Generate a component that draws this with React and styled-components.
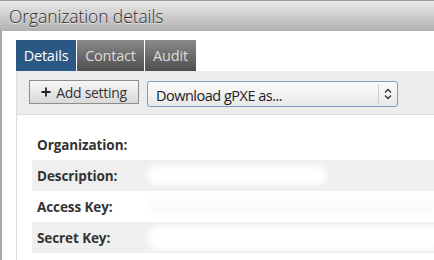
import React from "react";
import styled, { createGlobalStyle } from "styled-components";

const Global = createGlobalStyle`
  html, body { margin: 0; padding: 0; background: #fff; }
  body { font-family: "Open Sans", "Noto Sans", sans-serif; overflow: hidden; }
`;

const Page = styled.div`
  width: 434px;
  height: 260px;
  display: flex;
  flex-direction: column;
`;

const Header = styled.div`
  height: 30px;
  border-top: 1px solid #9a9a9a;
  background: linear-gradient(#e9e9e9, #b1b1b1);
  display: flex;
  align-items: center;
  padding-left: 9px;
  font-size: 17.5px;
  font-weight: 300;
  color: #2e2e2e;
  text-shadow: 0 1px 0 rgba(255,255,255,0.6);
  letter-spacing: -0.1px;
`;

const Body = styled.div`
  flex: 1;
  border-left: 2px solid #a8a8a8;
  padding: 9px 0 0 14px;
  display: flex;
  flex-direction: column;
`;

const Tabs = styled.div`
  display: flex;
  gap: 1px;
  height: 31px;
`;

const Tab = styled.div`
  width: ${p => p.$w}px;
  display: flex;
  align-items: center;
  justify-content: center;
  font-size: 14.5px;
  letter-spacing: -0.2px;
  color: ${p => (p.$active ? "#fff" : "#dcdcdc")};
  background: ${p =>
    p.$active ? "#2b5785" : "linear-gradient(#8a8a8a, #4e4e4e)"};
`;

const Panel = styled.div`
  flex: 1;
  border-left: 1px solid #dedede;
  display: flex;
  flex-direction: column;
`;

const Toolbar = styled.div`
  height: 44px;
  background: #ececec;
  border-bottom: 1px solid #dcdcdc;
  display: flex;
  align-items: flex-start;
  padding: 9px 0 0 12px;
  box-sizing: border-box;
  gap: 8px;
`;

const Button = styled.div`
  width: 110px;
  height: 24px;
  box-sizing: border-box;
  border: 1px solid #8e8e8e;
  background: linear-gradient(#f6f6f6, #d9d9d9);
  display: flex;
  align-items: center;
  justify-content: center;
  gap: 5px;
  font-size: 14px;
  letter-spacing: -0.3px;
  color: #333;
`;

const Select = styled.div`
  margin-top: 1px;
  width: 251px;
  height: 26px;
  box-sizing: border-box;
  border: 1px solid #7d9cc4;
  border-radius: 3px;
  background: linear-gradient(#fbfbfb, #e8e8e8);
  display: flex;
  align-items: center;
  font-size: 14.5px;
  letter-spacing: -0.5px;
  color: #222;
`;

const SelectText = styled.div`
  flex: 1;
  padding-left: 8px;
  padding-top: 3px;
`;

const SelectSep = styled.div`
  width: 1px;
  height: 20px;
  background: #cfcfcf;
`;

const SelectArrow = styled.div`
  width: 18px;
  display: flex;
  justify-content: center;
`;

const Rows = styled.div`
  padding: 14px 0 0 15px;
  display: flex;
  flex-direction: column;
`;

const Row = styled.div`
  height: 31px;
  display: flex;
  align-items: center;
  background: ${p => (p.$alt ? "#efefef" : "#fff")};
  position: relative;
`;

const Label = styled.div`
  width: 108px;
  padding-left: 5px;
  font-size: 13.5px;
  font-weight: 700;
  color: #333;
  letter-spacing: -0.1px;
`;

const Blur = styled.div`
  position: absolute;
  left: ${p => p.$l}px;
  width: ${p => p.$w}px;
  top: ${p => p.$t}px;
  height: ${p => p.$h}px;
  background: ${p => p.$c};
  border-radius: 12px;
  filter: blur(3px);
`;

const rows = [
  { label: "Organization:" },
  { label: "Description:", blur: { l: 115, w: 180, t: 6, h: 19, c: "#fff" } },
  { label: "Access Key:", blur: { l: 115, w: 290, t: 9, h: 14, c: "#fafafa" } },
  { label: "Secret Key:", blur: { l: 115, w: 300, t: 4, h: 24, c: "#fff" } },
];

export default function App() {
  return (
    <Page>
      <Global />
      <Header>Organization details</Header>
      <Body>
        <Tabs>
          <Tab $active $w={60}>Details</Tab>
          <Tab $w={67}>Contact</Tab>
          <Tab $w={51}>Audit</Tab>
        </Tabs>
        <Panel>
          <Toolbar>
            <Button>
              <svg width="10" height="10" viewBox="0 0 10 10">
                <path d="M5 0.5v9M0.5 5h9" stroke="#222" strokeWidth="1.8" />
              </svg>
              Add setting
            </Button>
            <Select>
              <SelectText>Download gPXE as...</SelectText>
              <SelectSep />
              <SelectArrow>
                <svg width="8" height="12" viewBox="0 0 8 12">
                  <path d="M1 4.5L4 1.5L7 4.5M1 7.5L4 10.5L7 7.5" stroke="#333" strokeWidth="1.3" fill="none" />
                </svg>
              </SelectArrow>
            </Select>
          </Toolbar>
          <Rows>
            {rows.map((r, i) => (
              <Row key={r.label} $alt={i % 2 === 1}>
                <Label>{r.label}</Label>
                {r.blur && (
                  <Blur $l={r.blur.l} $w={r.blur.w} $t={r.blur.t} $h={r.blur.h} $c={r.blur.c} />
                )}
              </Row>
            ))}
          </Rows>
        </Panel>
      </Body>
    </Page>
  );
}
